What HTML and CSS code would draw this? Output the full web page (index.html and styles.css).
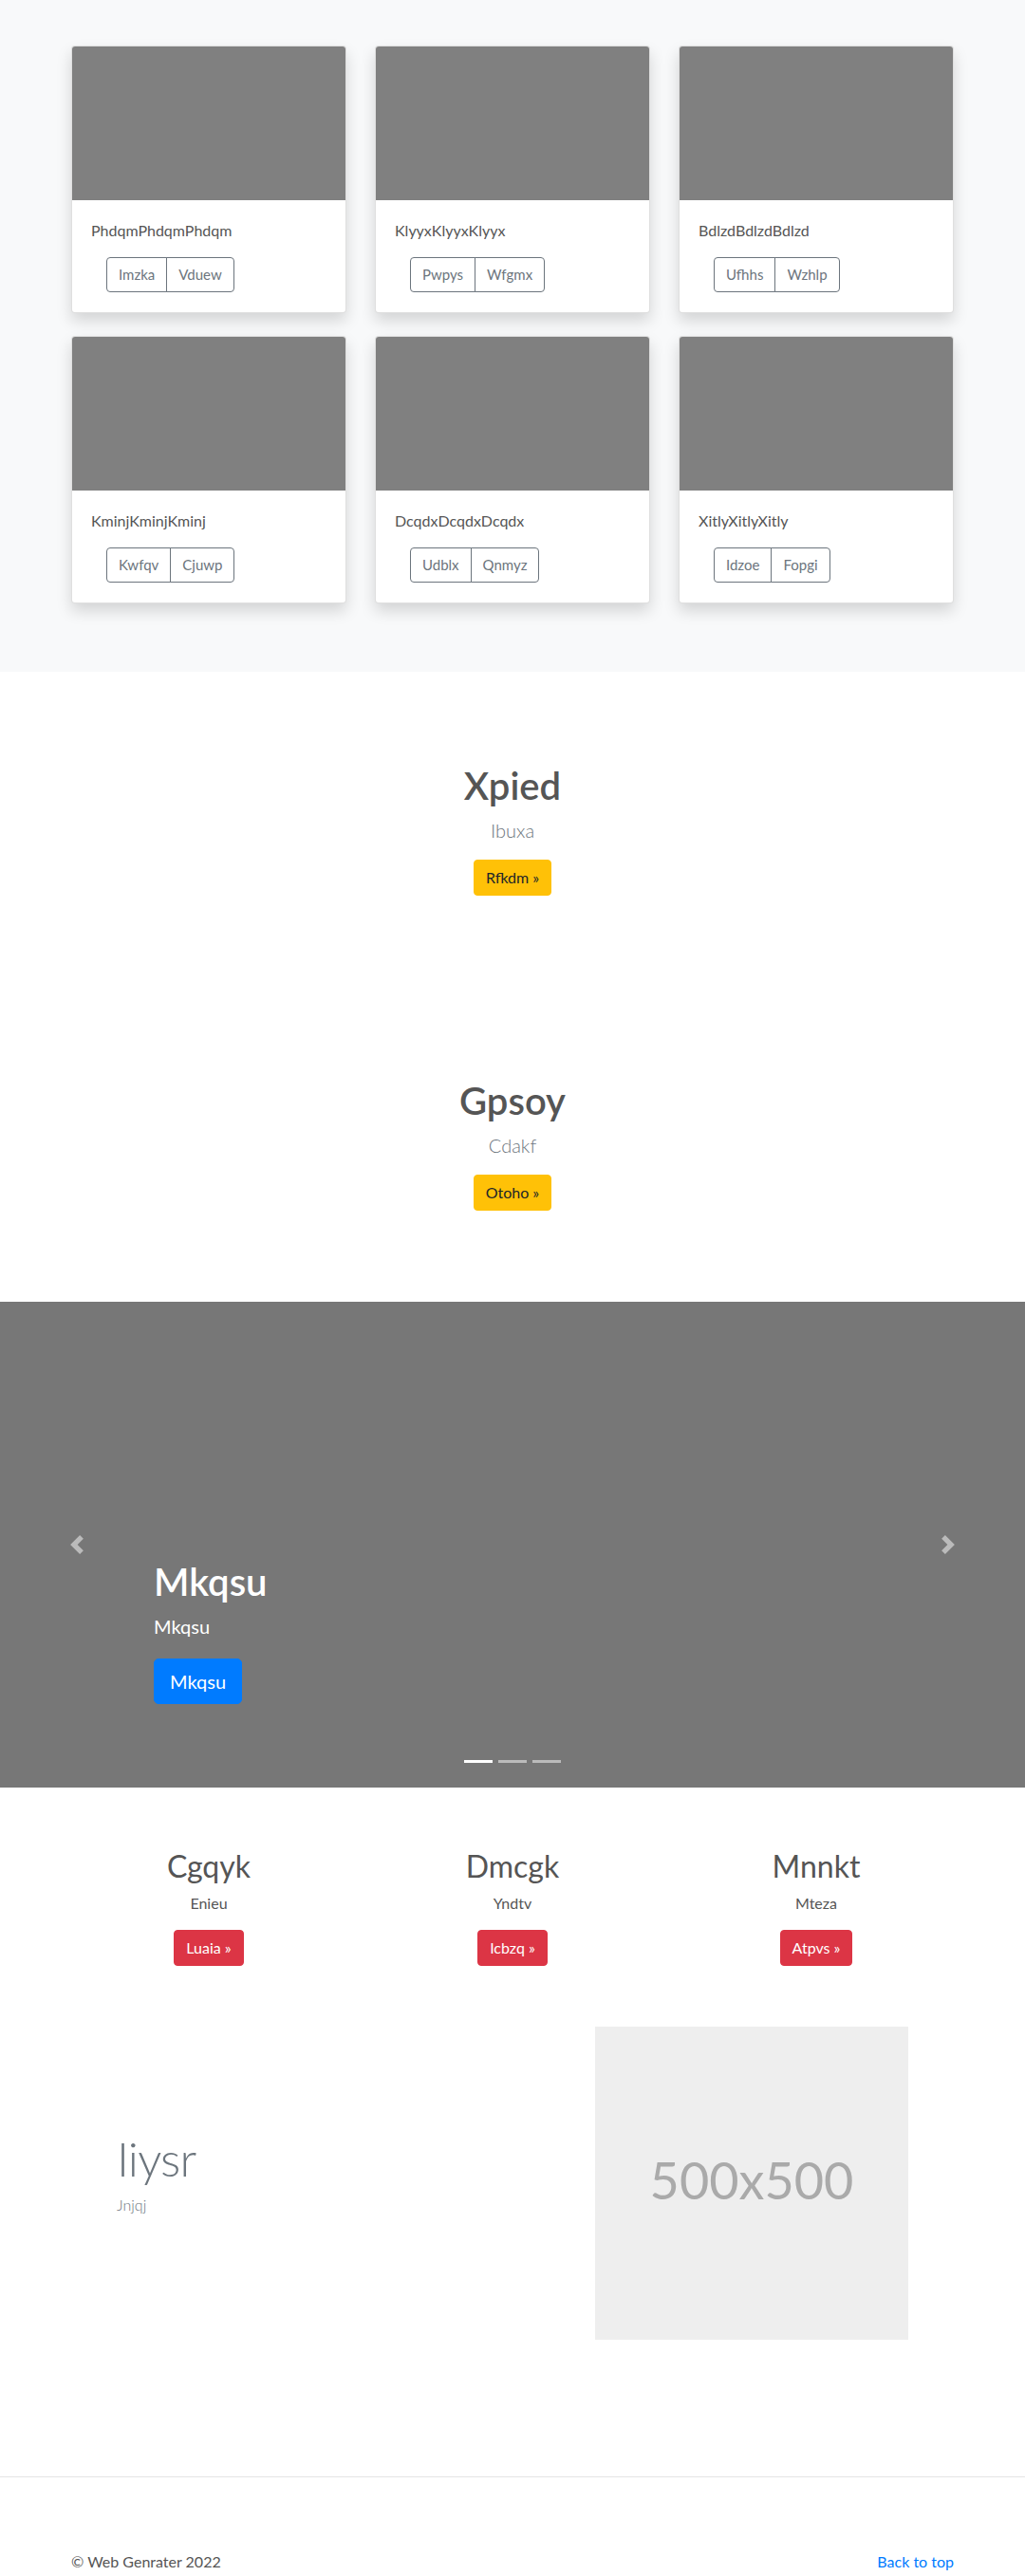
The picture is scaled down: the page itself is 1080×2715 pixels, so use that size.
FILE: index.html
```html
<!DOCTYPE html>
<html lang="en">
<head>
<meta charset="utf-8">
<title>Web Genrater</title>
<link rel="stylesheet" href="styles.css">
</head>
<body>
<main>
  <section class="album">
    <div class="container">
      <div class="card-grid">
        <div class="card">
          <div class="card-img"></div>
          <div class="card-body">
            <p class="card-text">PhdqmPhdqmPhdqm</p>
            <div class="btn-group"><button class="btn-outline">Imzka</button><button class="btn-outline">Vduew</button></div>
          </div>
        </div>
        <div class="card">
          <div class="card-img"></div>
          <div class="card-body">
            <p class="card-text">KlyyxKlyyxKlyyx</p>
            <div class="btn-group"><button class="btn-outline">Pwpys</button><button class="btn-outline">Wfgmx</button></div>
          </div>
        </div>
        <div class="card">
          <div class="card-img"></div>
          <div class="card-body">
            <p class="card-text">BdlzdBdlzdBdlzd</p>
            <div class="btn-group"><button class="btn-outline">Ufhhs</button><button class="btn-outline">Wzhlp</button></div>
          </div>
        </div>
        <div class="card">
          <div class="card-img"></div>
          <div class="card-body">
            <p class="card-text">KminjKminjKminj</p>
            <div class="btn-group"><button class="btn-outline">Kwfqv</button><button class="btn-outline">Cjuwp</button></div>
          </div>
        </div>
        <div class="card">
          <div class="card-img"></div>
          <div class="card-body">
            <p class="card-text">DcqdxDcqdxDcqdx</p>
            <div class="btn-group"><button class="btn-outline">Udblx</button><button class="btn-outline">Qnmyz</button></div>
          </div>
        </div>
        <div class="card">
          <div class="card-img"></div>
          <div class="card-body">
            <p class="card-text">XitlyXitlyXitly</p>
            <div class="btn-group"><button class="btn-outline">Idzoe</button><button class="btn-outline">Fopgi</button></div>
          </div>
        </div>
      </div>
    </div>
  </section>

  <section class="hero">
    <h1 class="hero-title">Xpied</h1>
    <p class="hero-lead">Ibuxa</p>
    <a class="btn btn-warning" href="#">Rfkdm &raquo;</a>
  </section>

  <section class="hero">
    <h1 class="hero-title">Gpsoy</h1>
    <p class="hero-lead">Cdakf</p>
    <a class="btn btn-warning" href="#">Otoho &raquo;</a>
  </section>

  <section class="carousel">
    <div class="carousel-caption">
      <h1 class="carousel-title">Mkqsu</h1>
      <p class="carousel-text">Mkqsu</p>
      <a class="btn btn-lg btn-primary carousel-btn" href="#">Mkqsu</a>
    </div>
    <a class="carousel-control prev" href="#" aria-label="Previous">
      <svg width="20" height="20" viewBox="0 0 8 8"><path fill="#fff" d="M5.25 0l-4 4 4 4 1.5-1.5L4.25 4l2.5-2.5L5.25 0z"/></svg>
    </a>
    <a class="carousel-control next" href="#" aria-label="Next">
      <svg width="20" height="20" viewBox="0 0 8 8"><path fill="#fff" d="M2.75 0l-1.5 1.5L3.75 4l-2.5 2.5L2.75 8l4-4-4-4z"/></svg>
    </a>
    <div class="carousel-indicators">
      <span class="indicator active"></span>
      <span class="indicator"></span>
      <span class="indicator"></span>
    </div>
  </section>

  <section class="container marketing">
    <div class="feature">
      <h2 class="feature-title">Cgqyk</h2>
      <p class="feature-text">Enieu</p>
      <a class="btn btn-danger" href="#">Luaia &raquo;</a>
    </div>
    <div class="feature">
      <h2 class="feature-title">Dmcgk</h2>
      <p class="feature-text">Yndtv</p>
      <a class="btn btn-danger" href="#">Icbzq &raquo;</a>
    </div>
    <div class="feature">
      <h2 class="feature-title">Mnnkt</h2>
      <p class="feature-text">Mteza</p>
      <a class="btn btn-danger" href="#">Atpvs &raquo;</a>
    </div>
  </section>

  <section class="featurette">
    <div class="featurette-row">
      <div class="featurette-copy">
        <h2 class="featurette-heading">Iiysr</h2>
        <p class="featurette-text">Jnjqj</p>
      </div>
      <div class="placeholder"><span>500x500</span></div>
    </div>
  </section>
</main>

<footer class="footer">
  <div class="container footer-inner">
    <p>&copy; Web Genrater 2022</p>
    <a class="back-link" href="#">Back to top</a>
  </div>
</footer>
</body>
</html>
```

FILE: styles.css
```css
* { box-sizing: border-box; }

body {
  margin: 0;
  font-family: Lato, "Open Sans", "Liberation Sans", sans-serif;
  font-size: 16px;
  line-height: 1.5;
  color: #555;
  background: #fff;
}

p, h1, h2 { margin: 0; }

.container {
  width: 960px;
  margin: 0 auto;
  padding: 0 15px;
}

/* Album */
.album {
  background: #f8f9fa;
  padding: 48px 0 72px;
}

.card-grid {
  display: grid;
  grid-template-columns: repeat(3, 1fr);
  column-gap: 30px;
  row-gap: 24px;
}

.card {
  background: #fff;
  border: 1px solid rgba(0, 0, 0, .125);
  border-radius: 4px;
  overflow: hidden;
  box-shadow: 0 8px 16px rgba(0, 0, 0, .15);
}

.card-img {
  height: 162px;
  background: #808080;
}

.card-body {
  padding: 20px 20px 21px;
}

.card-text {
  margin-bottom: 16px;
  color: #555;
}

.btn-group {
  display: inline-flex;
  margin-left: 16px;
}

.btn-outline {
  font-family: inherit;
  font-size: 15px;
  line-height: 23px;
  padding: 6px 12px;
  color: #6c757d;
  background: transparent;
  border: 1px solid #6c757d;
  border-radius: 4px 0 0 4px;
}

.btn-outline + .btn-outline {
  margin-left: -1px;
  border-radius: 0 4px 4px 0;
}

/* Buttons */
.btn {
  display: inline-block;
  font-size: 16px;
  line-height: 24px;
  padding: 6px 12px;
  border: 1px solid transparent;
  border-radius: 4px;
  text-decoration: none;
}

.btn-warning {
  background: #ffc107;
  border-color: #ffc107;
  color: #212529;
}

.btn-danger {
  background: #dc3545;
  border-color: #dc3545;
  color: #fff;
}

.btn-primary {
  background: #007bff;
  border-color: #007bff;
  color: #fff;
}

.btn-lg {
  font-size: 20px;
  line-height: 30px;
  padding: 8px 16px;
  border-radius: 5px;
}

/* Hero blocks */
.hero {
  padding: 96px 0;
  display: flex;
  flex-direction: column;
  align-items: center;
  text-align: center;
}

.hero-title {
  font-size: 40px;
  line-height: 48px;
  font-weight: 600;
  color: #555;
  margin-bottom: 8px;
}

.hero-lead {
  font-size: 20px;
  line-height: 30px;
  font-weight: 300;
  color: #6c757d;
  margin-bottom: 16px;
}

/* Carousel */
.carousel {
  position: relative;
  height: 512px;
  background: #777;
  margin-bottom: 64px;
}

.carousel-caption {
  position: absolute;
  left: 15%;
  right: 15%;
  bottom: 48px;
  padding-bottom: 20px;
  color: #fff;
  display: flex;
  flex-direction: column;
  align-items: flex-start;
  z-index: 2;
}

.carousel-title {
  font-size: 40px;
  line-height: 48px;
  font-weight: 600;
  margin-bottom: 8px;
}

.carousel-text {
  font-size: 20px;
  line-height: 30px;
  margin-bottom: 19px;
}

.carousel-btn {
  margin-bottom: 20px;
}

.carousel-control {
  position: absolute;
  top: 0;
  bottom: 0;
  width: 15%;
  display: flex;
  align-items: center;
  justify-content: center;
  opacity: .5;
}

.carousel-control.prev { left: 0; }
.carousel-control.next { right: 0; }

.carousel-indicators {
  position: absolute;
  left: 0;
  right: 0;
  bottom: 26px;
  display: flex;
  justify-content: center;
  gap: 6px;
}

.indicator {
  width: 30px;
  height: 3px;
  background: #fff;
  opacity: .5;
}

.indicator.active { opacity: 1; }

/* Marketing */
.marketing {
  display: grid;
  grid-template-columns: repeat(3, 1fr);
  column-gap: 30px;
}

.feature {
  display: flex;
  flex-direction: column;
  align-items: center;
  text-align: center;
  margin-bottom: 24px;
}

.feature-title {
  font-size: 32px;
  line-height: 38.4px;
  font-weight: 400;
  color: #555;
  margin-bottom: 8px;
}

.feature-text {
  margin-bottom: 16px;
}

.feature .btn {
  margin-bottom: 16px;
}

/* Featurette */
.featurette {
  width: 960px;
  margin: 0 auto;
  padding: 24px 63px;
}

.featurette-row {
  display: grid;
  grid-template-columns: 474px 330px;
  column-gap: 30px;
  align-items: center;
}

.featurette-heading {
  font-size: 50px;
  line-height: 1;
  font-weight: 300;
  letter-spacing: -0.8px;
  color: #6c757d;
  margin-bottom: 12px;
}

.featurette-text {
  font-weight: 300;
  color: #6c757d;
  margin-bottom: 16px;
}

.placeholder {
  width: 330px;
  height: 330px;
  background: #eee;
  color: #aaa;
  font-size: 54px;
  line-height: 1;
  display: flex;
  align-items: center;
  justify-content: center;
  padding-bottom: 6px;
}

/* Footer */
.footer {
  margin-top: 120px;
  border-top: 1px solid #e5e5e5;
}

.footer-inner {
  display: flex;
  justify-content: space-between;
  padding-top: 77px;
  padding-bottom: 48px;
}

.back-link {
  color: #007bff;
  text-decoration: none;
}
```
